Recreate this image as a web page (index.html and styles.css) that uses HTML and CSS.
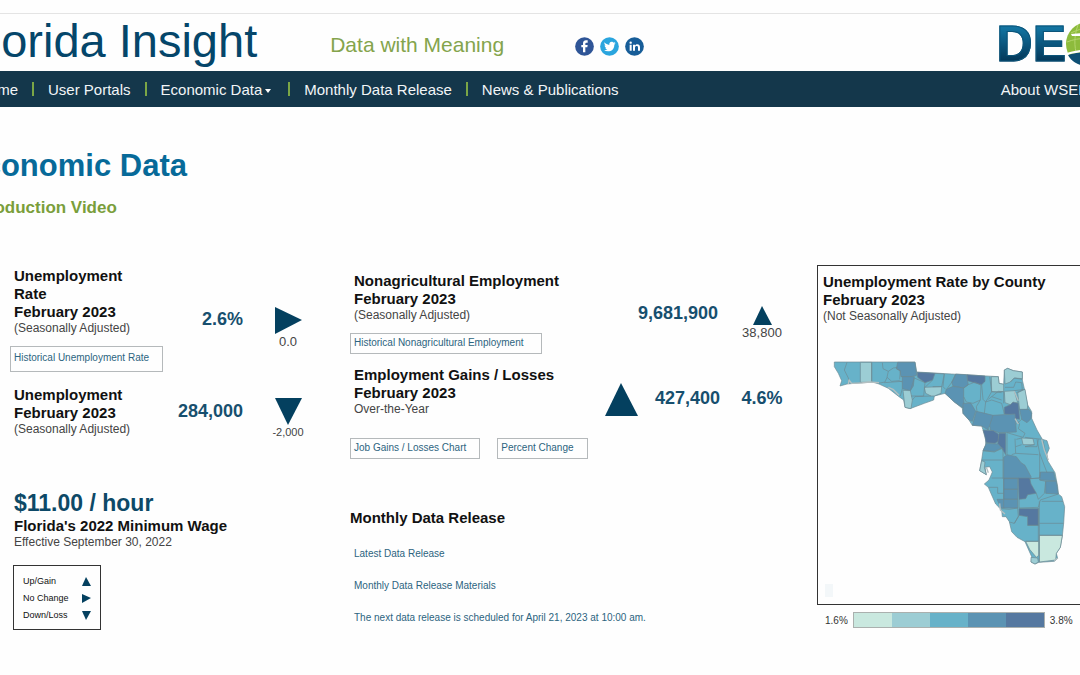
FILE: index.html
```html
<!DOCTYPE html>
<html lang="en">
<head>
    <meta charset="UTF-8">
    <meta name="viewport" content="width=device-width, initial-scale=1.0">
    <title>Florida Insight - Economic Data</title>
    <link rel="stylesheet" href="styles.css">
</head>
<body>
<div class="page">
    <header class="site-header">
        <div class="site-title">Florida Insight</div>
        <div class="tagline">Data with Meaning</div>
        <div class="social">
            <a href="#" aria-label="Facebook">
                <svg viewBox="0 0 57 57"><circle cx="28.500" cy="28.500" r="28" fill="#2f5597"/><path d="M24 46V31h-5v-7h5v-5c0-6 4-9 9-9h5v7h-4c-2 0-3 1-3 3v4h7l-1 7h-6v15z" fill="#fff"/></svg>
            </a>
            <a href="#" aria-label="Twitter">
                <svg viewBox="0 0 57 57"><circle cx="28.500" cy="28.500" r="28" fill="#2aa5de"/><path d="M13 16c4 5 9 7 15 8-1-6 2-10 7-10 3 0 4 1 6 3l5-2-3 5 4-1-4 4c0 13-8 20-19 20-5 0-9-1-12-3 4 0 8-1 10-3-3 0-5-2-6-5h3c-4-1-5-4-5-7l3 1c-4-3-4-7-4-10z" fill="#fff"/></svg>
            </a>
            <a href="#" aria-label="LinkedIn">
                <svg viewBox="0 0 57 57"><circle cx="28.500" cy="28.500" r="28" fill="#175d98"/><path d="M14 23h6v18h-6zM24 23h6v3c2-3 4-4 7-4 5 0 8 3 8 9v10h-6v-9c0-3-1-5-4-5s-5 2-5 5v9h-6z" fill="#fff"/><circle cx="17" cy="17" r="3.500" fill="#fff"/></svg>
            </a>
        </div>
        <div class="logo">
            <span class="logo-text">DE</span>
            <svg class="logo-globe" viewBox="0 0 44 44">
                <circle cx="22" cy="22" r="22" fill="#8dbb3c"/>
                <path d="M5 11C16 5 28 5 40 10M1 20c12-5 28-5 42 0M12 3C8 14 8 24 11 34M22 0v32" stroke="#b3d56c" fill="none"/>
                <path d="M5 12l13-1 12 2 6 10 1 9-4 1-6-8-2-7-8-4-11 0z" fill="#fff"/>
                <path d="M2 33C12 30 30 29 43 27C40 38 32 44 22 44C12 44 5 39 2 33z" fill="#0d4f74"/>
                <path d="M1 32C12 28 30 28 43 25" stroke="#fff" stroke-width="2" fill="none"/>
            </svg>
        </div>
    </header>

    <nav class="main-nav">
        <ul>
            <li><a href="#">Home</a></li>
            <li><a href="#">User Portals</a></li>
            <li><a href="#">Economic Data<span class="caret"></span></a></li>
            <li><a href="#">Monthly Data Release</a></li>
            <li><a href="#">News &amp; Publications</a></li>
        </ul>
        <a class="about" href="#">About WSER</a>
    </nav>

    <main>
        <h1>Economic Data</h1>
        <h2 class="intro"><a href="#">Introduction Video</a></h2>

        <div class="dashboard">
            <section class="col-rate">
                <div class="metric">
                    <div>
                        <h3>Unemployment<br>Rate<br>February 2023</h3>
                        <p class="note">(Seasonally Adjusted)</p>
                        <a class="box-link tall" href="#">Historical Unemployment Rate</a>
                    </div>
                    <div class="value">2.6%</div>
                    <div class="change">
                        <svg width="27" height="27" viewBox="0 0 27 27"><polygon points="0,0 27,13 0,27"/></svg>
                        <span>0.0</span>
                    </div>
                </div>
                <div class="metric">
                    <div>
                        <h3>Unemployment<br>February 2023</h3>
                        <p class="note">(Seasonally Adjusted)</p>
                    </div>
                    <div class="value">284,000</div>
                    <div class="change">
                        <svg width="27" height="27" viewBox="0 0 27 27"><polygon points="0,0 27,0 13,27"/></svg>
                        <span class="small">-2,000</span>
                    </div>
                </div>

                <div class="wage">
                    <div class="wage-value">$11.00 / hour</div>
                    <h3>Florida's 2022 Minimum Wage</h3>
                    <p class="note">Effective September 30, 2022</p>
                </div>

                <ul class="key">
                    <li>Up/Gain <svg width="9" height="9" viewBox="0 0 9 9"><polygon points="0,9 4,0 9,9"/></svg></li>
                    <li>No Change <svg width="9" height="9" viewBox="0 0 9 9"><polygon points="0,0 9,4 0,9"/></svg></li>
                    <li>Down/Loss <svg width="9" height="9" viewBox="0 0 9 9"><polygon points="0,0 9,0 4,9"/></svg></li>
                </ul>
            </section>

            <section class="col-jobs">
                <div class="metric nonag">
                    <div>
                        <h3>Nonagricultural Employment<br>February 2023</h3>
                        <p class="note">(Seasonally Adjusted)</p>
                        <a class="box-link wide" href="#">Historical Nonagricultural Employment</a>
                    </div>
                    <div class="value">9,681,900</div>
                    <div class="change">
                        <svg width="19" height="19" viewBox="0 0 19 19"><polygon points="0,19 9,0 19,19"/></svg>
                        <span>38,800</span>
                    </div>
                </div>
                <div class="metric gains">
                    <div>
                        <h3>Employment Gains / Losses<br>February 2023</h3>
                        <p class="note">Over-the-Year</p>
                    </div>
                    <svg class="big-arrow" width="33" height="33" viewBox="0 0 33 33"><polygon points="0,33 16,0 33,33"/></svg>
                    <div class="value">427,400</div>
                    <div class="value percent">4.6%</div>
                </div>
                <div class="link-row">
                    <a class="box-link" href="#">Job Gains / Losses Chart</a>
                    <a class="box-link" href="#">Percent Change</a>
                </div>

                <div class="release">
                    <h3>Monthly Data Release</h3>
                    <ul>
                        <li><a href="#">Latest Data Release</a></li>
                        <li><a href="#">Monthly Data Release Materials</a></li>
                        <li><a href="#">The next data release is scheduled for April 21, 2023 at 10:00 am.</a></li>
                    </ul>
                </div>
            </section>

            <section class="col-map">
                <div class="map-panel">
                    <h3>Unemployment Rate by County<br>February 2023</h3>
                    <p class="note">(Not Seasonally Adjusted)</p>
                    <svg class="map" width="255" height="225" viewBox="0 0 765 675">
                        <!-- state -->
                        <path class="c3" d="M28 36H270L275 66L380 72L520 80L522 100L536 103L538 60L548 55L565 62L592 66L592 90L600 125L608 165L620 185L620 205L636 240L652 268L666 272L673 295L666 312L668 332L690 368L698 410L700 432L710 440L719 470L716 520L712 558L706 592L694 610L698 625L688 634L642 637L630 642L618 636L620 620L600 575L576 562L560 545L553 515L543 500L532 500L530 480L522 472L512 462L500 435L490 412L478 402L492 390L502 366L494 350L480 352L484 374L464 362L470 330L474 302L482 285L482 262L470 228L442 226L432 210L414 190L412 175L388 156L360 130L328 138L326 150L298 160L255 176L240 172L236 150L222 140L190 115L162 102L132 93L100 99L66 102L45 108L50 92L40 70L28 50z"/>
                        <!-- shaded counties -->
                        <path class="c2" d="M106 37H140V97H106z"/>
                        <path class="c4" d="M218 37H270L275 76L258 80H228L225 62L214 56z"/>
                        <path class="c4" d="M232 80H268L265 108L256 122L232 116z"/>
                        <path class="c5" d="M277 67L330 70L323 90L300 98L278 82z"/>
                        <path class="c2" d="M298 112L350 110L348 130L328 138L318 138L302 130z"/>
                        <path class="c2" d="M234 121L256 122L262 150L258 176L240 172z"/>
                        <path class="c4" d="M392 72L425 74L430 104L416 114L384 108L380 96z"/>
                        <path class="c5" d="M426 74L480 78L480 94L470 104L440 96L428 92z"/>
                        <path class="c2" d="M499 80L520 80L522 100L536 103V125H500z"/>
                        <path class="c2" d="M538 60L548 55L565 62L592 66V86L568 84L556 96L540 102z"/>
                        <path class="c2" d="M538 124L568 122L578 158L556 164L540 158z"/>
                        <path class="c2" d="M578 128L600 118L608 165L607 178L584 180z"/>
                        <path class="c4" d="M364 118L384 109L416 114V140L418 176L388 156L360 130z"/>
                        <path class="c4" d="M414 160L438 160L452 184L442 214L432 210L414 190z"/>
                        <path class="c5" d="M538 172L556 164L564 156L580 160L584 208L570 206L560 194L538 192z"/>
                        <path class="c4" d="M584 178L612 178L620 190L618 206L606 218L590 208z"/>
                        <path class="c4" d="M454 184L480 190L504 196L502 224L490 232V240L470 228L442 226z"/>
                        <path class="c4" d="M504 196L570 192L574 246L522 248L496 240L494 226z"/>
                        <path class="c5" d="M474 240L505 242L520 252L522 272L510 280L484 278z"/>
                        <path class="c5" d="M522 250H542V314L530 294L518 282z"/>
                        <path class="c4" d="M484 280L520 282L530 294L508 304L474 302z"/>
                        <path class="c2" d="M590 264L624 266L628 284L594 284z"/>
                        <path class="c2" d="M470 332L480 336L478 352L484 374L464 362z"/>
                        <path class="c4" d="M536 322L546 314L574 320L588 338L600 346L618 380L618 386H536z"/>
                        <path class="c4" d="M536 386H578V418H536z"/>
                        <path class="c4" d="M536 418H578V448H536z"/>
                        <path class="c4" d="M516 448H578V474H528z"/>
                        <path class="c5" d="M580 384H614L618 402L634 430L608 434L602 446L582 448z"/>
                        <path class="c4" d="M646 366H686L692 392L644 390z"/>
                        <path class="c4" d="M662 394H694L700 432L662 430z"/>
                        <path class="c5" d="M582 476H640V526H608V500L582 496z"/>
                        <path class="c1" d="M602 574H641V616L634 622L614 598z"/>
                        <path class="c1" d="M643 556H712L706 592L694 610L692 630L643 636z"/>
                        <path class="c2" d="M618 622L638 624L640 636L630 642L618 636z"/>
                        <!-- borders -->
                        <path class="line" d="M66 37L58 60L70 84L72 102M140 37V95M172 38L174 56L190 64L186 82L180 96L160 100M190 64L205 54L218 52M186 82L200 94L222 92L232 96M178 98L232 94M214 56L226 62L224 88M232 116L226 138M268 84L300 98L296 138L258 138M268 84L256 122M262 150L270 140L318 138M330 70L358 72L350 110L323 110M323 90L300 112M358 72L354 110L362 118M392 72L384 92L366 116M416 114L430 104L450 96L468 106L466 150L444 160L424 156L416 140M470 104L474 148L482 156L488 146L500 125L494 80M466 150L454 170L456 184M482 156L478 190M482 156L500 150L530 160L538 192M490 148L520 124L536 125V160M500 125L530 128M500 140L530 150M556 96L568 84L592 88M540 112L566 112L572 96L590 98L592 120L574 128M568 122L600 118M572 206L584 222L580 236L600 250L594 262L546 248M574 222L590 208M600 262L652 268M546 250V314M570 266L572 310L560 314M574 268L590 264M628 284L600 290H636L640 268M572 290L590 284M572 310L640 314M474 302L508 306L534 294L534 330M470 330L534 330V386M636 268L644 310V384L618 386M644 310L666 368M654 272L660 300L668 332M500 384H580M490 412L518 412V430H536M536 386V474M614 386L644 384L646 366M644 390L662 394L658 430L640 448L634 430M582 448V474L640 472L646 450L700 432M650 454H714M643 454V636M530 476L552 478L578 474L580 500L568 520L553 516M582 496L568 520M608 526H640V574H602M643 520H716M643 556H712M640 474V526"/>
                        <path class="water" d="M70 102L72 90L80 100L110 99L132 96L162 98M190 112L204 118L222 136M568 124L580 152M570 206L580 222M650 268L658 300L670 330M484 352L490 368M524 460L526 480L540 492M688 632L698 624"/>
                    </svg>
                    <div class="map-tool"></div>
                </div>
                <div class="scale">
                    <span>1.6%</span>
                    <div class="scale-bar"><i class="s1"></i><i class="s2"></i><i class="s3"></i><i class="s4"></i><i class="s5"></i></div>
                    <span>3.8%</span>
                </div>
            </section>
        </div>
    </main>
</div>
</body>
</html>
```
FILE: styles.css
```css
body {
    font-family: "Liberation Sans", Arial, sans-serif;
    margin: 0;
    background-color: #fefefe;
    color: #111;
    overflow-x: hidden;
}
h1, h2, h3, p, ul {
    margin: 0;
    padding: 0;
}
ul {
    list-style-type: none;
}
a {
    text-decoration: none;
}
svg {
    display: block;
}

/* the page is wider than the window on both sides */
.page {
    margin: 0 -40px;
    padding-top: 13px;
}

/* header */
.site-header {
    display: flex;
    align-items: center;
    height: 54px;
    padding: 0 10px 3px 2px;
    border-top: 1px solid #e4e4e4;
}
.site-title {
    font-size: 47px;
    line-height: 54px;
    color: #05466a;
    white-space: nowrap;
}
.tagline {
    margin-left: 73px;
    padding-top: 8px;
    font-size: 21px;
    color: #84a44c;
    white-space: nowrap;
}
.social {
    display: flex;
    gap: 6px;
    margin-left: 71px;
    padding-top: 11px;
}
.social svg {
    width: 19px;
    height: 19px;
}
.logo {
    display: flex;
    align-items: center;
    margin-left: auto;
    padding-top: 5px;
}
.logo-text {
    font-size: 50px;
    line-height: 52px;
    font-weight: bold;
    color: transparent;
    background: linear-gradient(#1273a0 20%, #043a5c 80%);
    background-clip: text;
    -webkit-background-clip: text;
    -webkit-text-stroke: 1px #0b5479;
}
.logo-globe {
    width: 44px;
    height: 44px;
}

/* navigation */
.main-nav {
    display: flex;
    justify-content: space-between;
    align-items: center;
    height: 34px;
    padding: 1px 31px 1px 18px;
    background-color: #14374b;
    font-size: 15px;
    white-space: nowrap;
}
.main-nav ul {
    display: flex;
}
.main-nav li {
    display: flex;
    align-items: center;
}
.main-nav li + li::before {
    content: "";
    width: 2px;
    height: 14px;
    margin: 0 14px;
    background-color: #7ba646;
}
.main-nav a {
    color: #f2f5f7;
}
.caret {
    display: inline-block;
    margin: 0 3px 2px 3px;
    border: 3px solid transparent;
    border-top: 4px solid #fff;
    border-bottom: 0;
}

/* page headings */
h1 {
    margin-top: 41px;
    padding-left: 3px;
    font-size: 31px;
    line-height: 36px;
    color: #076a99;
}
.intro {
    margin-top: 14px;
    padding-left: 7px;
    font-size: 17px;
    line-height: 20px;
}
.intro a {
    color: #7a9e3b;
}

/* dashboard */
.dashboard {
    display: grid;
    grid-template-columns: 340px 467px 1fr;
    margin-top: 47px;
    padding-left: 50px;
}
h3 {
    font-size: 15px;
    line-height: 18px;
    padding-left: 4px;
    white-space: nowrap;
}
.note {
    font-size: 12px;
    line-height: 14px;
    padding-left: 4px;
    color: #444;
}
.metric {
    display: grid;
    grid-template-columns: 153px 80px 90px;
    align-items: center;
}
.value {
    font-size: 18px;
    font-weight: bold;
    color: #174f6e;
    text-align: right;
}
.change {
    display: flex;
    flex-direction: column;
    align-items: center;
    padding-top: 16px;
    font-size: 13px;
    line-height: 15px;
    color: #444;
}
.change .small {
    font-size: 11px;
}
polygon {
    fill: #04405f;
}
.box-link {
    display: block;
    box-sizing: border-box;
    height: 21px;
    padding: 0 13px 0 3px;
    border: 1px solid #b5b9bb;
    font-size: 10px;
    line-height: 18px;
    color: #2c6480;
    white-space: nowrap;
}
.box-link.tall {
    height: 26px;
    margin-top: 11px;
    line-height: 22px;
}
.box-link.wide {
    width: 192px;
    margin-top: 11px;
}

.col-rate {
    padding-top: 2px;
}
.col-rate .metric + .metric {
    margin-top: 10px;
}
.wage {
    margin-top: 49px;
}
.wage-value {
    padding-left: 4px;
    font-size: 23px;
    line-height: 28px;
    font-weight: bold;
    color: #0d4967;
}
.key {
    width: 68px;
    margin: 16px 0 0 3px;
    padding: 7px 9px 5px;
    border: 1px solid #333;
    font-size: 9px;
    line-height: 17px;
}
.key li {
    display: flex;
    justify-content: space-between;
    align-items: center;
}

.col-jobs {
    padding-top: 7px;
}
.nonag {
    grid-template-columns: 230px 138px 88px;
}
.nonag .change {
    padding-top: 20px;
}
.gains {
    grid-template-columns: 238px 66px 66px 84px;
    align-items: end;
    margin-top: 12px;
}
.gains .value {
    line-height: 35px;
}
.gains .percent {
    text-align: center;
}
.big-arrow {
    justify-self: center;
}
.link-row {
    display: flex;
    gap: 17px;
    margin-top: 22px;
}
.release {
    margin-top: 50px;
}
.release h3 {
    padding-left: 0;
}
.release ul {
    margin-top: 20px;
    padding-left: 4px;
    font-size: 10px;
    line-height: 14px;
}
.release li + li {
    margin-top: 18px;
}
.release a {
    color: #2c6480;
}

/* county map */
.map-panel {
    padding: 7px 0 7px 1px;
    border: 1px solid #333;
}
.map {
    margin: 27px 0 0 6px;
    stroke: #6c8a93;
    stroke-width: 2;
    stroke-linejoin: round;
}
.c1 { fill: #c9e8df; }
.c2 { fill: #9ccdd4; }
.c3 { fill: #67b2c9; }
.c4 { fill: #5b93b3; }
.c5 { fill: #5578a0; }
.line {
    fill: none;
}
.water {
    fill: none;
    stroke: #b3bfc1;
    stroke-width: 4;
}
.map-tool {
    width: 8px;
    height: 13px;
    margin: 9px 0 0 6px;
    background-color: #f3f7f9;
}
.scale {
    display: flex;
    align-items: center;
    gap: 5px;
    margin-top: 7px;
    padding-left: 8px;
    font-size: 10px;
    color: #333;
}
.scale-bar {
    display: grid;
    grid-template-columns: repeat(5, 1fr);
    width: 190px;
    height: 14px;
    border: 1px solid #aab0ae;
}
.s1 { background-color: #c9e8df; }
.s2 { background-color: #9ccdd4; }
.s3 { background-color: #67b2c9; }
.s4 { background-color: #5b93b3; }
.s5 { background-color: #5578a0; }
```
